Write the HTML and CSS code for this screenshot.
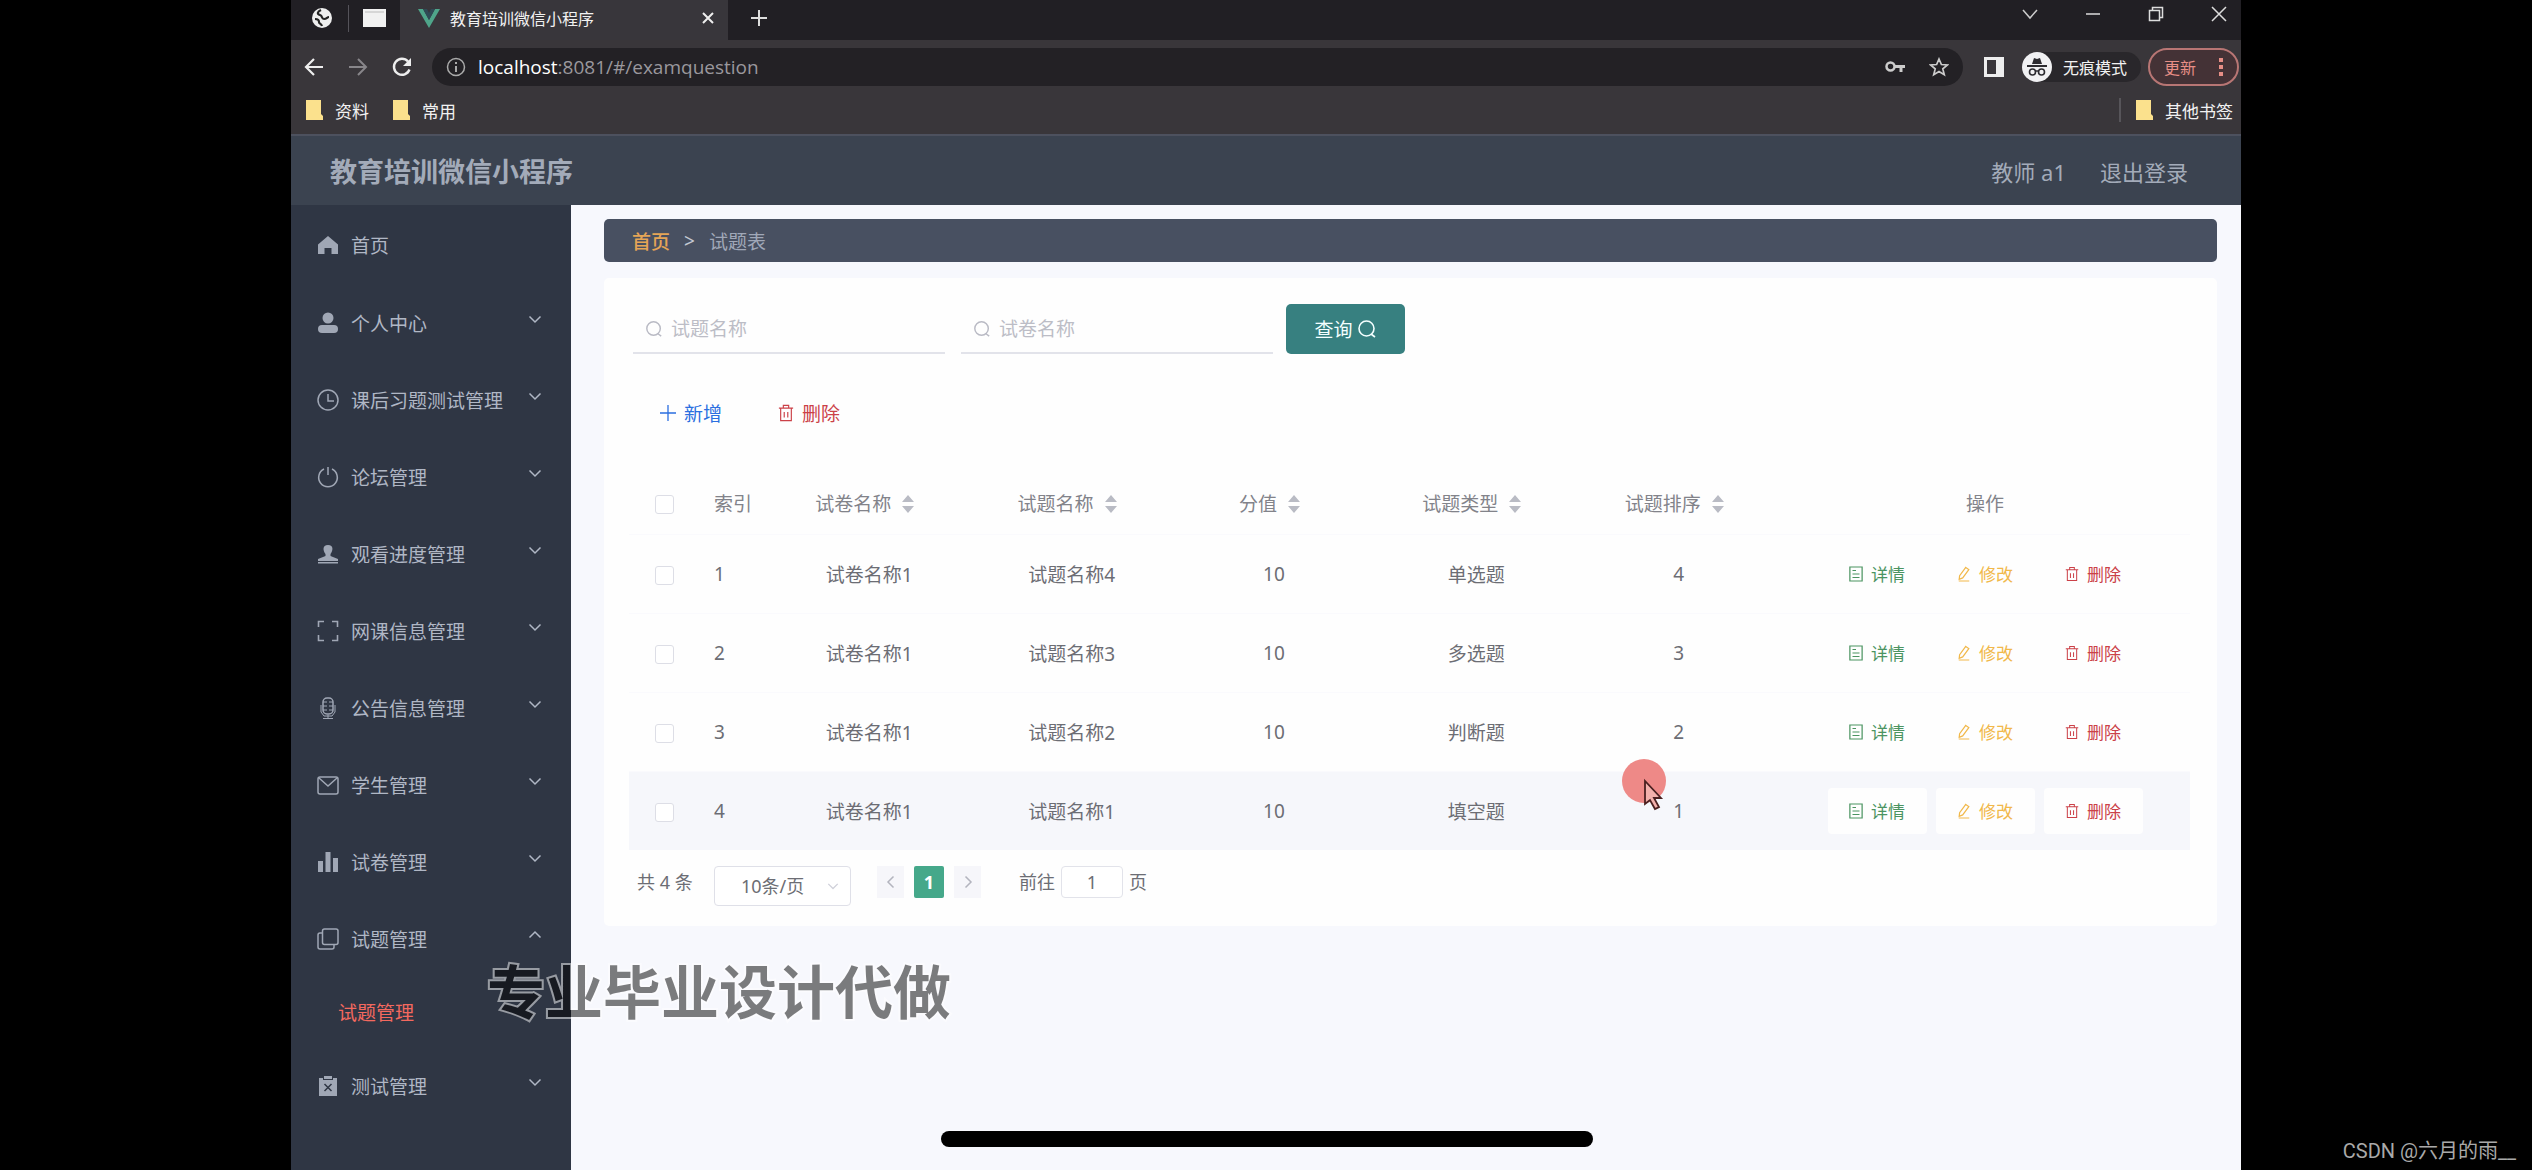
FILE: index.html
```html
<!DOCTYPE html>
<html lang="zh-CN">
<head>
<meta charset="utf-8">
<title>教育培训微信小程序</title>
<link rel="stylesheet" href="styles.css">
</head>
<body>
<svg class="sprite" aria-hidden="true">
  <symbol id="chev" viewBox="0 0 14 14"><path d="M1.500 4.500 7 10l5.500-5.500" fill="none" stroke="currentColor" stroke-width="1.500"/></symbol>
  <symbol id="search" viewBox="0 0 20 20"><circle cx="9.500" cy="9.500" r="7.500" fill="none" stroke="currentColor" stroke-width="1.600"/><path d="M14 15l4 3" fill="none" stroke="currentColor" stroke-width="1.600"/></symbol>
  <symbol id="trash" viewBox="0 0 18 20"><path d="M1 4.500h16M6 4.500V1.500h6v3M3 4.500v14h12v-14M7 9v6M11 9v6" fill="none" stroke="currentColor" stroke-width="1.300"/></symbol>
  <symbol id="doc" viewBox="0 0 16 18"><path d="M1 1h14v16H1zM4 5h4M4 9h8M4 13h8" fill="none" stroke="currentColor" stroke-width="1.400"/></symbol>
  <symbol id="pen" viewBox="0 0 16 18"><path d="M10 1.500 13.500 4 6.500 13.500 2.500 15l.5-4zM2 17h12" fill="none" stroke="currentColor" stroke-width="1.400"/></symbol>
  <symbol id="sort" viewBox="0 0 14 20"><path d="M7 1l6 7H1zM7 19l6-7H1z" fill="currentColor"/></symbol>
  <symbol id="folder" viewBox="0 0 17 20"><path d="M0 0h15v14l2 2v4H0z" fill="#fbe18d"/></symbol>
</svg>

<div class="browser">
  <div class="tabstrip">
    <div class="pinned">
      <svg width="22" height="22" viewBox="0 0 22 22"><circle cx="11" cy="11" r="10" fill="#eee"/><path d="M10 3c-4 2-4 4-1 5s1 4 4 4 3-2 5-2M4 12c3 0 4 1 4 3s2 1 3 4" fill="none" stroke="#222" stroke-width="2.200"/></svg>
      <span class="pin-line"></span>
      <svg width="23" height="18" viewBox="0 0 23 18"><path d="M0 0h23v18H0z" fill="#f1f1f1"/><path d="M2 3h19" stroke="#bbb"/></svg>
    </div>
    <div class="tab">
      <svg width="22" height="19" viewBox="0 0 22 19"><path d="M0 0h5l6 11 6-11h5L11 19z" fill="#4fa58a"/><path d="M5 0h4l2 4 2-4h4l-6 11z" fill="#2f4a55"/></svg>
      <span class="tab-title">教育培训微信小程序</span>
      <button class="icon-btn" aria-label="关闭标签页"><svg width="14" height="14" viewBox="0 0 14 14"><path d="M2 2l10 10M12 2L2 12" stroke="#eee" stroke-width="2"/></svg></button>
    </div>
    <button class="icon-btn newtab" aria-label="新标签页"><svg width="18" height="18" viewBox="0 0 18 18"><path d="M9 1v16M1 9h16" stroke="#ddd" stroke-width="2"/></svg></button>
    <div class="winctl">
      <button class="icon-btn" aria-label="搜索标签页"><svg width="16" height="16" viewBox="0 0 16 16"><path d="M1 4l7 8 7-8" fill="none" stroke="#ccc" stroke-width="1.500"/></svg></button>
      <button class="icon-btn" aria-label="最小化"><svg width="16" height="16" viewBox="0 0 16 16"><path d="M1 8h14" stroke="#ddd" stroke-width="1.500"/></svg></button>
      <button class="icon-btn" aria-label="还原"><svg width="16" height="16" viewBox="0 0 16 16"><path d="M1.500 4.500h10v10h-10zM4.500 4V1.500h10v10H12" fill="none" stroke="#ddd" stroke-width="1.500"/></svg></button>
      <button class="icon-btn" aria-label="关闭"><svg width="16" height="16" viewBox="0 0 16 16"><path d="M1 1l14 14M15 1L1 15" stroke="#ddd" stroke-width="1.500"/></svg></button>
    </div>
  </div>

  <div class="toolbar">
    <div class="navbtns">
      <button class="icon-btn" aria-label="后退"><svg width="20" height="20" viewBox="0 0 20 20"><path d="M19 10H2M10 2l-8 8 8 8" fill="none" stroke="#eee" stroke-width="2.200"/></svg></button>
      <button class="icon-btn" aria-label="前进"><svg width="20" height="20" viewBox="0 0 20 20"><path d="M1 10h17M10 2l8 8-8 8" fill="none" stroke="#88868a" stroke-width="2"/></svg></button>
      <button class="icon-btn" aria-label="刷新"><svg width="20" height="20" viewBox="0 0 20 20"><path d="M17.500 12.500A8 8 0 1 1 16 4.500" fill="none" stroke="#eee" stroke-width="2.400"/><path d="M19 1v8h-8z" fill="#eee"/></svg></button>
    </div>
    <div class="address">
      <svg width="20" height="20" viewBox="0 0 20 20"><circle cx="10" cy="10" r="8.500" fill="none" stroke="#aaa" stroke-width="1.500"/><path d="M10 9v6M10 5v2" stroke="#aaa" stroke-width="2"/></svg>
      <span class="url"><b>localhost</b>:8081/#/examquestion</span>
      <svg class="key" width="20" height="14" viewBox="0 0 20 14"><circle cx="5.500" cy="6.500" r="4" fill="none" stroke="#ccc" stroke-width="2.500"/><path d="M9 6.500h11M16 7v5" stroke="#ccc" stroke-width="3"/></svg>
      <svg width="20" height="20" viewBox="0 0 20 20"><path d="M10 2l2.400 5.500 6 .5-4.600 3.900 1.500 5.900L10 14.600l-5.300 3.200 1.500-5.900L1.600 8l6-.5z" fill="none" stroke="#ccc" stroke-width="1.700"/></svg>
    </div>
    <svg class="panel" width="20" height="20" viewBox="0 0 20 20"><path d="M1.500 1.500h17v17h-17z" fill="none" stroke="#eee" stroke-width="3"/><path d="M12 2h6v16h-6z" fill="#eee"/></svg>
    <div class="incognito">
      <svg width="30" height="30" viewBox="0 0 30 30"><circle cx="15" cy="15" r="15" fill="#f1f1f3"/><path d="M10 12l2-6 3 1 3-1 2 6zM5 13h20v2H5z" fill="#2c2b30"/><circle cx="10.500" cy="20" r="3" fill="none" stroke="#2c2b30" stroke-width="1.600"/><circle cx="19.500" cy="20" r="3" fill="none" stroke="#2c2b30" stroke-width="1.600"/><path d="M13 19h4" stroke="#2c2b30" stroke-width="1.500"/></svg>
      <span>无痕模式</span>
    </div>
    <button class="update">更新<svg width="4" height="20" viewBox="0 0 4 20"><path d="M0 1h4v4H0zM0 8h4v4H0zM0 15h4v4H0z" fill="currentColor"/></svg></button>
  </div>

  <div class="bookmarks">
    <a href="#"><svg width="17" height="20"><use href="#folder"/></svg>资料</a>
    <a href="#"><svg width="17" height="20"><use href="#folder"/></svg>常用</a>
    <a href="#" class="other"><svg width="17" height="20"><use href="#folder"/></svg>其他书签</a>
  </div>

  <header class="app-header">
    <h1>教育培训微信小程序</h1>
    <span class="user">教师 a1</span>
    <a href="#" class="logout">退出登录</a>
  </header>

  <div class="app">
    <nav class="sidebar">
      <a href="#" class="home"><svg class="mi" viewBox="0 0 22 22"><path d="M11 2l10 8.500V20h-6.500v-6h-7v6H1v-9.500z" fill="currentColor"/></svg>首页</a>
      <a href="#"><svg class="mi" viewBox="0 0 22 22"><circle cx="11" cy="6" r="5.500" fill="currentColor"/><rect x="1" y="13" width="20" height="8" rx="4" fill="currentColor"/></svg>个人中心<svg class="arrow"><use href="#chev"/></svg></a>
      <a href="#"><svg class="mi" viewBox="0 0 22 22"><path d="M11 5v7h6" fill="none" stroke="currentColor" stroke-width="1.500"/><circle cx="11" cy="11" r="10" fill="none" stroke="currentColor" stroke-width="1.500"/></svg>课后习题测试管理<svg class="arrow"><use href="#chev"/></svg></a>
      <a href="#"><svg class="mi" viewBox="0 0 22 22"><path d="M11 1v8M7 3a9.300 9.300 0 1 0 8 0" fill="none" stroke="currentColor" stroke-width="1.500"/></svg>论坛管理<svg class="arrow"><use href="#chev"/></svg></a>
      <a href="#"><svg class="mi" viewBox="0 0 22 22"><path d="M11 2c6 0 5 6 2.500 9v2l7.500 3v2H1v-2l7.500-3v-2C6 8 5 2 11 2zM1 19h20v1.500H1z" fill="currentColor"/></svg>观看进度管理<svg class="arrow"><use href="#chev"/></svg></a>
      <a href="#"><svg class="mi" viewBox="0 0 22 22"><path d="M1.500 7V1.500H7M15 1.500h5.500V7M20.500 15v5.500H15M7 20.500H1.500V15" fill="none" stroke="currentColor" stroke-width="1.600"/></svg>网课信息管理<svg class="arrow"><use href="#chev"/></svg></a>
      <a href="#"><svg class="mi" viewBox="0 0 22 22"><rect x="6" y="1" width="10" height="16" rx="4" fill="none" stroke="currentColor" stroke-width="1.500"/><path d="M6 5h4M12 5h4M6 9h4M12 9h4M6 13h4M12 13h4M4 8v7l3 4h8l3-4V8M11 18v3M6 21.500h10" fill="none" stroke="currentColor"/></svg>公告信息管理<svg class="arrow"><use href="#chev"/></svg></a>
      <a href="#"><svg class="mi" viewBox="0 0 22 22"><rect x="1" y="3" width="20" height="17" rx="2" fill="none" stroke="currentColor" stroke-width="1.500"/><path d="M2 4l9 8 9-8" fill="none" stroke="currentColor" stroke-width="1.500"/></svg>学生管理<svg class="arrow"><use href="#chev"/></svg></a>
      <a href="#"><svg class="mi" viewBox="0 0 22 22"><path d="M1 10h5v11H1zM8.500 1h5v20h-5zM16 7h5v14h-5z" fill="currentColor"/></svg>试卷管理<svg class="arrow"><use href="#chev"/></svg></a>
      <a href="#"><svg class="mi" viewBox="0 0 22 22"><rect x="5.500" y="1" width="15.500" height="15.500" rx="2" fill="none" stroke="currentColor" stroke-width="1.500"/><path d="M5 5H3a2 2 0 0 0-2 2v12a2 2 0 0 0 2 2h12a2 2 0 0 0 2-2v-2" fill="none" stroke="currentColor" stroke-width="1.500"/></svg>试题管理<svg class="arrow up"><use href="#chev"/></svg></a>
      <a href="#" class="sub">试题管理</a>
      <a href="#"><svg class="mi" viewBox="0 0 22 22"><path d="M2 3h4v2h10V3h4v18H2zM7 1h8v3H7z" fill="currentColor"/><path d="M7.500 9l7 7M14.500 9l-7 7" stroke="#2f3644" stroke-width="1.500"/></svg>测试管理<svg class="arrow"><use href="#chev"/></svg></a>
    </nav>

    <main class="content">
      <div class="crumbs"><a href="#">首页</a><span class="gt">&gt;</span><span>试题表</span></div>
      <section class="card">
        <form class="filters">
          <label class="field"><svg width="18" height="18"><use href="#search"/></svg><input type="text" placeholder="试题名称" aria-label="试题名称"></label>
          <label class="field"><svg width="18" height="18"><use href="#search"/></svg><input type="text" placeholder="试卷名称" aria-label="试卷名称"></label>
          <button type="button" class="query">查询<svg width="20" height="20"><use href="#search"/></svg></button>
        </form>
        <div class="tools">
          <button class="add"><svg width="16" height="16" viewBox="0 0 16 16"><path d="M8 0v16M0 8h16" stroke="currentColor" stroke-width="1.300"/></svg>新增</button>
          <button class="del"><svg width="16" height="18"><use href="#trash"/></svg>删除</button>
        </div>
        <table>
          <colgroup><col class="c-check"><col class="c-idx"><col><col><col><col><col><col class="c-ops"></colgroup>
          <thead>
            <tr><th><input type="checkbox" aria-label="全选"></th><th class="idx">索引</th><th class="sortable">试卷名称<svg class="sort"><use href="#sort"/></svg></th><th class="sortable">试题名称<svg class="sort"><use href="#sort"/></svg></th><th class="sortable">分值<svg class="sort"><use href="#sort"/></svg></th><th class="sortable">试题类型<svg class="sort"><use href="#sort"/></svg></th><th class="sortable">试题排序<svg class="sort"><use href="#sort"/></svg></th><th>操作</th></tr>
          </thead>
          <tbody>
            <tr><td><input type="checkbox" aria-label="选择第1行"></td><td class="idx">1</td><td>试卷名称1</td><td>试题名称4</td><td>10</td><td>单选题</td><td>4</td><td><div class="ops"><button class="view"><svg><use href="#doc"/></svg>详情</button><button class="edit"><svg><use href="#pen"/></svg>修改</button><button class="del"><svg><use href="#trash"/></svg>删除</button></div></td></tr>
            <tr><td><input type="checkbox" aria-label="选择第2行"></td><td class="idx">2</td><td>试卷名称1</td><td>试题名称3</td><td>10</td><td>多选题</td><td>3</td><td><div class="ops"><button class="view"><svg><use href="#doc"/></svg>详情</button><button class="edit"><svg><use href="#pen"/></svg>修改</button><button class="del"><svg><use href="#trash"/></svg>删除</button></div></td></tr>
            <tr><td><input type="checkbox" aria-label="选择第3行"></td><td class="idx">3</td><td>试卷名称1</td><td>试题名称2</td><td>10</td><td>判断题</td><td>2</td><td><div class="ops"><button class="view"><svg><use href="#doc"/></svg>详情</button><button class="edit"><svg><use href="#pen"/></svg>修改</button><button class="del"><svg><use href="#trash"/></svg>删除</button></div></td></tr>
            <tr class="hover"><td><input type="checkbox" aria-label="选择第4行"></td><td class="idx">4</td><td>试卷名称1</td><td>试题名称1</td><td>10</td><td>填空题</td><td>1</td><td><div class="ops"><button class="view"><svg><use href="#doc"/></svg>详情</button><button class="edit"><svg><use href="#pen"/></svg>修改</button><button class="del"><svg><use href="#trash"/></svg>删除</button></div></td></tr>
          </tbody>
        </table>
        <div class="pager">
          <span class="total">共 4 条</span>
          <div class="size"><select aria-label="每页条数"><option>10条/页</option></select><svg><use href="#chev"/></svg></div>
          <button class="step prev" aria-label="上一页"><svg><use href="#chev"/></svg></button>
          <button class="page">1</button>
          <button class="step next" aria-label="下一页"><svg><use href="#chev"/></svg></button>
          <label class="jump">前往<input type="text" value="1">页</label>
        </div>
      </section>
    </main>
  </div>
</div>

<div class="watermark">专业毕业设计代做</div>
<svg class="pointer" viewBox="0 0 44 54"><circle cx="22" cy="22" r="22" fill="#ee8987"/><path d="M23 22v23l5-4 5 9 4-2-5-9h7z" fill="#f3b0ac" stroke="#4a2020" stroke-width="1.800"/></svg>
<div class="homebar"></div>
<div class="credit">CSDN @六月的雨__</div>
</body>
</html>
```
FILE: styles.css
```css
* { box-sizing: border-box; }

body {
  margin: 0;
  background: #000;
  font-family: "Noto Sans", "Noto Sans CJK SC", sans-serif;
  font-size: 19px;
}

a { color: inherit; text-decoration: none; }
button, input, select { font: inherit; color: inherit; }
button { border: 0; background: none; padding: 0; cursor: pointer; white-space: nowrap; }
svg { flex: none; display: block; }
.sprite { position: absolute; width: 0; height: 0; }

.browser {
  display: flex;
  flex-direction: column;
  min-height: 100vh;
  margin: 0 291px;
  background: #39363a;
}

/* Browser chrome */
.icon-btn { display: flex; align-items: center; justify-content: center; }

.tabstrip {
  display: flex;
  height: 40px;
  background: #211f24;
  color: #f2f2f2;
  font-size: 16px;
}
.pinned {
  display: flex;
  align-items: center;
  width: 109px;
  padding: 0 14px 4px 20px;
  justify-content: space-between;
}
.pin-line { width: 1px; height: 27px; background: #55535a; }
.tab {
  display: flex;
  align-items: center;
  gap: 10px;
  width: 328px;
  padding: 0 13px 4px 18px;
  background: #38363b;
}
.tab-title { flex: 1; }
.newtab { padding: 0 22px 4px; }
.winctl { display: flex; gap: 47px; margin-left: auto; padding: 0 14px 12px 0; }

.toolbar {
  display: flex;
  align-items: center;
  height: 53px;
  font-size: 16px;
  color: #f2f2f2;
}
.navbtns { display: flex; gap: 24px; width: 141px; padding-left: 13px; }
.address {
  display: flex;
  align-items: center;
  gap: 12px;
  flex: 1;
  height: 38px;
  padding: 0 14px;
  border-radius: 19px;
  background: #232125;
}
.url { flex: 1; font-family: "Open Sans", sans-serif; font-size: 19px; color: #9a989d; }
.url b { font-weight: 400; color: #fff; }
.key { margin-right: 12px; }
.panel { margin: 0 18px 0 21px; }
.incognito {
  display: flex;
  align-items: center;
  gap: 11px;
  width: 119px;
  border-radius: 15px;
  background: #29272b;
}
.update {
  display: flex;
  align-items: center;
  justify-content: space-between;
  width: 91px;
  height: 38px;
  margin: 0 2px 0 7px;
  padding: 0 14px;
  border: 2px solid #b87674;
  border-radius: 19px;
  background: #443236;
  color: #e78e86;
}

.bookmarks {
  display: flex;
  gap: 24px;
  height: 43px;
  padding: 5px 8px 0 15px;
  border-bottom: 2px solid #4d515e;
  color: #f2f2f2;
  font-size: 17px;
}
.bookmarks a { display: flex; align-items: center; gap: 12px; height: 24px; }
.bookmarks .other {
  margin-left: auto;
  padding-left: 15px;
  border-left: 2px solid #57555a;
}

/* Application header */
.app-header {
  display: flex;
  align-items: center;
  height: 69px;
  padding: 0 53px 0 39px;
  background: #3b4350;
  color: #a3abb9;
  font-size: 22px;
}
.app-header h1 { margin: 0; font-size: 27px; }
.user { margin-left: auto; }
.logout { margin-left: 34px; }

.app { display: flex; flex: 1; }

.sidebar {
  width: 280px;
  flex: none;
  background: #2f3644;
  color: #b0b7c5;
}
.sidebar a {
  display: flex;
  align-items: center;
  gap: 12px;
  height: 77px;
  padding: 0 29px 0 26px;
}
.sidebar .home { height: 79px; }
.sidebar .sub { height: 70px; padding-left: 47px; color: #f4695f; }
.mi { width: 22px; height: 22px; color: #a0a7b5; }
.arrow { width: 14px; height: 14px; margin: 0 0 8px auto; }
.arrow.up { transform: rotate(180deg); }

/* Content */
.content {
  flex: 1;
  padding: 14px 24px 0 33px;
  background: #f7f8fd;
}
.crumbs {
  display: flex;
  align-items: center;
  gap: 14px;
  height: 43px;
  margin-bottom: 16px;
  padding: 0 28px;
  border-radius: 5px;
  background: #485061;
  color: #a0a8b8;
}
.crumbs a { color: #e5a556; font-weight: 500; }
.crumbs .gt { color: #c3c8d2; }

.card {
  padding: 26px 27px 20px 25px;
  border-radius: 5px;
  background: #fefefe;
}
.filters { display: flex; gap: 16px; padding-left: 4px; }
.field {
  display: flex;
  align-items: center;
  gap: 8px;
  width: 312px;
  padding: 2px 0 0 12px;
  border-bottom: 2px solid #e2e3ea;
  color: #b9bac4;
}
.field input { flex: 1; min-width: 0; padding: 0; border: 0; outline: 0; background: none; }
.field input::placeholder { color: #bcbdc6; opacity: 1; }
.query {
  display: flex;
  align-items: center;
  justify-content: center;
  gap: 4px;
  width: 119px;
  height: 50px;
  margin-left: -3px;
  border-radius: 5px;
  background: #378080;
  color: #f4ffff;
}

.tools { display: flex; gap: 56px; height: 40px; margin: 39px 0; padding-left: 31px; }
.tools button { display: flex; align-items: center; gap: 8px; }
.add { color: #2b6fe0; }
.del { color: #cb4148; }

table { width: 100%; table-layout: fixed; border-collapse: collapse; color: #6c6d74; }
.c-check { width: 71px; }
.c-idx { width: 68px; }
.c-ops { width: 410px; }
th { height: 62px; padding: 0; font-weight: 400; color: #82838a; text-align: center; }
td { height: 79px; padding: 0; text-align: center; border-top: 1px solid #fafafd; }
th.idx, td.idx { padding-left: 14px; text-align: left; }
th.sortable { padding-right: 8px; }
.sort { display: inline-block; width: 14px; height: 20px; margin-left: 10px; color: #b9bbc4; vertical-align: -3px; }
.hover td { background: #f6f7fb; }
input[type="checkbox"] {
  appearance: none;
  width: 19px;
  height: 19px;
  margin: 0;
  border: 1px solid #dddee6;
  border-radius: 3px;
  background: #fff;
  vertical-align: middle;
}

.ops { display: flex; justify-content: center; gap: 9px; font-size: 17px; }
.ops button {
  display: flex;
  align-items: center;
  justify-content: center;
  gap: 8px;
  width: 99px;
  height: 46px;
  border-radius: 4px;
  background: #fefefe;
}
.ops svg { width: 14px; height: 16px; }
.view { color: #4b9461; }
.edit { color: #f1b84a; }

.pager {
  display: flex;
  align-items: flex-start;
  height: 40px;
  margin-top: 16px;
  padding-left: 8px;
  color: #6c6d74;
  font-size: 18px;
  line-height: 32px;
}
.total { width: 77px; }
.size { display: flex; align-items: center; width: 137px; margin-right: 26px; }
.size select {
  appearance: none;
  width: 100%;
  height: 40px;
  padding: 0 26px;
  border: 1px solid #dfe0e8;
  border-radius: 4px;
  background: #fff;
}
.size svg { width: 12px; height: 12px; margin-left: -24px; margin-right: 12px; color: #d0d1da; }
.step {
  display: flex;
  align-items: center;
  justify-content: center;
  width: 27px;
  height: 32px;
  background: #f6f6fa;
  color: #b3b4be;
}
.step svg { width: 14px; height: 14px; }
.prev svg { transform: rotate(90deg); }
.next svg { transform: rotate(-90deg); }
.page {
  width: 30px;
  height: 32px;
  margin: 0 10px;
  border-radius: 2px;
  background: #45a88a;
  color: #fff;
  font-weight: 700;
}
.jump { display: flex; gap: 6px; margin-left: 38px; }
.jump input {
  width: 62px;
  height: 32px;
  border: 1px solid #e2e3ea;
  border-radius: 4px;
  background: #fff;
  text-align: center;
}

/* Overlays on top of the recording */
.watermark {
  position: absolute;
  left: 487px;
  top: 954px;
  font-family: "Noto Sans CJK SC", sans-serif;
  font-size: 58px;
  font-weight: 700;
  line-height: 70px;
  color: #000;
  -webkit-text-stroke: 4px #fff;
  paint-order: stroke fill;
  opacity: .5;
}
.pointer { position: absolute; left: 1622px; top: 759px; width: 44px; height: 54px; overflow: visible; }
.homebar {
  position: absolute;
  left: 50%;
  bottom: 23px;
  width: 652px;
  height: 16px;
  margin-left: -325px;
  border-radius: 8px;
  background: #000;
}
.credit {
  position: absolute;
  right: 16px;
  bottom: 6px;
  color: #a9a9a9;
  font-family: Roboto, "Noto Sans CJK SC", sans-serif;
  font-size: 20px;
  line-height: 26px;
}
```
